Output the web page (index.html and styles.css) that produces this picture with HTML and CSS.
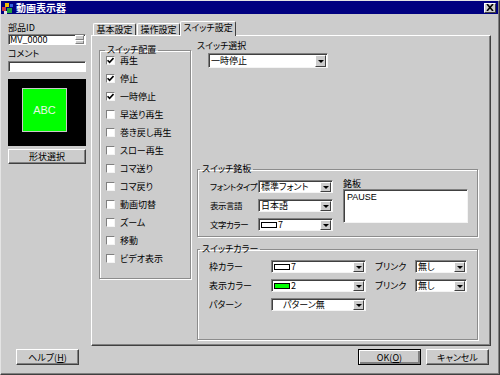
FILE: index.html
```html
<!DOCTYPE html>
<html lang="ja">
<head>
  <meta charset="UTF-8">
  <title>動画表示器</title>
  <link rel="stylesheet" href="styles.css">
</head>
<body>
  <div class="window">
    <div class="titlebar">
      <svg class="app-icon" width="12" height="12" viewBox="0 0 12 12">
        <rect x="0" y="5" width="4" height="4" fill="#d04040"/>
        <rect x="3" y="1" width="4" height="4" fill="#f0c000"/>
        <rect x="5" y="6" width="5" height="5" fill="#20a040"/>
        <rect x="8" y="2" width="3" height="3" fill="#3060e0"/>
        <rect x="2" y="9" width="3" height="3" fill="#e0e0e0"/>
      </svg>
      <span class="title">動画表示器</span>
      <span class="close">
        <svg width="8" height="7" viewBox="0 0 8 7">
          <path d="M1 0 L7 7 M7 0 L1 7" stroke="#000" stroke-width="1.6"/>
        </svg>
      </span>
    </div>

    <div class="main">
      <div class="sidebar">
        <div class="label">部品ID</div>
        <div class="field">
          <span class="field-text">MV_0000</span>
          <span class="spinner"><i></i><i></i></span>
        </div>
        <div class="label label-gap">コメント</div>
        <div class="field field-comment"></div>
        <div class="preview">
          <div class="preview-shape">ABC</div>
        </div>
        <button class="btn btn-shape">形状選択</button>
      </div>

      <div class="tabs-area">
        <div class="tabs">
          <div class="tab tab-basic">基本設定</div>
          <div class="tab tab-op">操作設定</div>
          <div class="tab tab-switch active">スイッチ設定</div>
        </div>
        <div class="panel">
          <fieldset class="group layout-group">
            <legend>スイッチ配置</legend>
            <ul class="checks">
              <li><span class="check on"><svg width="7" height="7" viewBox="0 0 7 7"><path d="M0.5 3.2 L2.6 5.4 L6.5 1" fill="none" stroke="#000" stroke-width="1.6"/></svg></span><span>再生</span></li>
              <li><span class="check on"><svg width="7" height="7" viewBox="0 0 7 7"><path d="M0.5 3.2 L2.6 5.4 L6.5 1" fill="none" stroke="#000" stroke-width="1.6"/></svg></span><span>停止</span></li>
              <li><span class="check on"><svg width="7" height="7" viewBox="0 0 7 7"><path d="M0.5 3.2 L2.6 5.4 L6.5 1" fill="none" stroke="#000" stroke-width="1.6"/></svg></span><span>一時停止</span></li>
              <li><span class="check"></span><span>早送り再生</span></li>
              <li><span class="check"></span><span>巻き戻し再生</span></li>
              <li><span class="check"></span><span>スロー再生</span></li>
              <li><span class="check"></span><span>コマ送り</span></li>
              <li><span class="check"></span><span>コマ戻り</span></li>
              <li><span class="check"></span><span>動画切替</span></li>
              <li><span class="check"></span><span>ズーム</span></li>
              <li><span class="check"></span><span>移動</span></li>
              <li><span class="check"></span><span>ビデオ表示</span></li>
            </ul>
          </fieldset>

          <div class="right">
            <div class="label">スイッチ選択</div>
            <div class="select sel-switch"><span class="val">一時停止</span><span class="arrow"></span></div>

            <fieldset class="group plate-group">
              <legend>スイッチ銘板</legend>
              <div class="plate-body">
                <div class="form-grid">
                  <span class="row-label">フォントタイプ</span>
                  <div class="select"><span class="val">標準フォント</span><span class="arrow"></span></div>
                  <span class="row-label">表示言語</span>
                  <div class="select"><span class="val">日本語</span><span class="arrow"></span></div>
                  <span class="row-label">文字カラー</span>
                  <div class="select"><span class="val"><span class="swatch"></span>7</span><span class="arrow"></span></div>
                </div>
                <div class="plate-text">
                  <div class="label">銘板</div>
                  <div class="textarea">PAUSE</div>
                </div>
              </div>
            </fieldset>

            <fieldset class="group color-group">
              <legend>スイッチカラー</legend>
              <div class="color-grid">
                <span class="row-label">枠カラー</span>
                <div class="select"><span class="val"><span class="swatch"></span>7</span><span class="arrow"></span></div>
                <span class="row-label blink">ブリンク</span>
                <div class="select"><span class="val">無し</span><span class="arrow"></span></div>

                <span class="row-label">表示カラー</span>
                <div class="select"><span class="val"><span class="swatch green"></span>2</span><span class="arrow"></span></div>
                <span class="row-label blink">ブリンク</span>
                <div class="select"><span class="val">無し</span><span class="arrow"></span></div>

                <span class="row-label">パターン</span>
                <div class="select"><span class="val val-pattern">パターン無</span><span class="arrow"></span></div>
              </div>
            </fieldset>
          </div>
        </div>
      </div>
    </div>

    <div class="footer">
      <button class="btn">ヘルプ(<u>H</u>)</button>
      <div class="footer-right">
        <button class="btn btn-default">OK(<u>O</u>)</button>
        <button class="btn">キャンセル</button>
      </div>
    </div>
  </div>
</body>
</html>
```

FILE: styles.css
```css
body {
  margin: 0;
  font-family: "Noto Sans CJK JP", "Liberation Sans", sans-serif;
  font-size: 9px;
  font-feature-settings: "palt";
  color: #000;
  background-color: #cccccc;
}

.window {
  width: 500px;
  height: 375px;
  box-sizing: border-box;
  background-color: #cccccc;
  border: 1px solid;
  border-color: #e4e4e4 #404040 #404040 #e4e4e4;
  box-shadow: inset -1px -1px #808080;
  display: flex;
  flex-direction: column;
}

/* title bar */

.titlebar {
  height: 13px;
  margin-right: 1px;
  background-color: #000080;
  display: flex;
  align-items: center;
  padding: 0 2px 0 1px;
  gap: 2px;
}

.app-icon {
  flex: none;
}

.title {
  flex: 1;
  color: #fff;
  font-weight: bold;
  font-size: 10px;
  line-height: 13px;
}

.close {
  width: 12px;
  height: 10px;
  box-sizing: border-box;
  background-color: #cccccc;
  border: 1px solid;
  border-color: #fff #404040 #404040 #fff;
  display: flex;
  align-items: center;
  justify-content: center;
}

.close svg {
  display: block;
}

/* body */

.main {
  display: flex;
  gap: 5px;
  padding: 7px 0 0 7px;
}

.sidebar {
  width: 78px;
  padding-top: 1px;
  display: flex;
  flex-direction: column;
}

.label {
  line-height: 11px;
  white-space: nowrap;
}

.sidebar .label:first-child {
  margin-bottom: 1px;
}

.label-gap {
  margin-top: 3px;
}

.field {
  height: 11px;
  box-sizing: border-box;
  background-color: #fff;
  border: 1px solid;
  border-color: #808080 #fff #fff #808080;
  box-shadow: inset 1px 1px #404040;
  display: flex;
  align-items: center;
}

.field-text {
  flex: 1;
  padding-left: 1px;
  font-size: 9px;
  line-height: 9px;
}

.spinner {
  width: 9px;
  height: 9px;
  margin-right: 1px;
  display: flex;
  flex-direction: column;
}

.spinner i {
  flex: 1;
  background-color: #cccccc;
  border: 1px solid;
  border-color: #fff #808080 #808080 #fff;
}

.field-comment {
  margin-top: 2px;
}

.preview {
  height: 67px;
  margin-top: 7px;
  background-color: #000;
  padding: 9px 0 0 14px;
  box-sizing: border-box;
}

.preview-shape {
  width: 45px;
  height: 44px;
  box-sizing: border-box;
  background-color: #00ff00;
  border: 1px solid #c8c8c8;
  color: #e8f8e8;
  font-family: "Liberation Sans", sans-serif;
  font-size: 11px;
  display: flex;
  align-items: center;
  justify-content: center;
}

.btn {
  width: 63px;
  height: 16px;
  box-sizing: border-box;
  padding: 0;
  background-color: #cccccc;
  border: 1px solid;
  border-color: #fff #404040 #404040 #fff;
  box-shadow: inset -1px -1px #808080;
  font-family: inherit;
  font-size: 9px;
  font-feature-settings: "palt";
  line-height: 13px;
  color: #000;
}

.btn-shape {
  width: 78px;
  height: 15px;
  margin-top: 3px;
}

.btn-default {
  border-color: #000;
  box-shadow: inset 1px 1px #fff, inset -2px -2px #808080;
}

/* tabs */

.tabs-area {
  width: 400px;
}

.tabs {
  height: 14px;
  display: flex;
  align-items: flex-end;
  padding-left: 2px;
}

.tab {
  height: 12px;
  box-sizing: border-box;
  border: 1px solid;
  border-bottom: none;
  border-color: #fff #404040 #404040 #fff;
  border-radius: 2px 2px 0 0;
  line-height: 11px;
  text-align: center;
  white-space: nowrap;
}

.tab-basic {
  width: 43px;
}

.tab-op {
  width: 43px;
  margin-left: 1px;
}

.tab-switch {
  width: 56px;
}

.tab.active {
  height: 15px;
  margin-bottom: -1px;
  position: relative;
  z-index: 1;
  background-color: #cccccc;
  line-height: 12px;
}

.panel {
  height: 311px;
  box-sizing: border-box;
  border: 1px solid;
  border-color: #fff #404040 #404040 #fff;
  box-shadow: inset -1px -1px #808080;
  display: flex;
  align-items: flex-start;
  gap: 6px;
  padding: 4px 0 0 7px;
}

/* group boxes */

.group {
  margin: 0;
  padding: 0;
  min-width: 0;
  border: 1px solid #8c8c8c;
  box-shadow: inset 1px 1px #fff, 1px 1px #fff;
}

.group legend {
  padding: 0 2px;
  margin-left: 2px;
  line-height: 10px;
  white-space: nowrap;
}

.layout-group {
  width: 92px;
  height: 234px;
  box-sizing: border-box;
  margin-top: 5px;
}

.layout-group legend {
  margin-left: 5px;
}

.checks {
  list-style: none;
  margin: -4px 0 0 0;
  padding: 0 0 0 6px;
}

.checks li {
  height: 18px;
  display: flex;
  align-items: center;
  gap: 5px;
  white-space: nowrap;
}

.checks li span:last-child {
  line-height: 9px;
}

.check {
  width: 9px;
  height: 9px;
  box-sizing: border-box;
  flex: none;
  background-color: #fff;
  border: 1px solid;
  border-color: #808080 #f4f4f4 #f4f4f4 #808080;
  display: flex;
  align-items: center;
  justify-content: center;
}

.check svg {
  display: block;
}

.right {
  width: 281px;
  display: flex;
  flex-direction: column;
}

.right > .label {
  line-height: 12px;
}

/* dropdowns */

.select {
  height: 13px;
  box-sizing: border-box;
  display: flex;
  background-color: #fff;
  border: 1px solid;
  border-color: #808080 #f4f4f4 #f4f4f4 #808080;
  box-shadow: inset 1px 1px #404040;
}

.select .val {
  flex: 1;
  min-width: 0;
  padding-left: 2px;
  line-height: 11px;
  white-space: nowrap;
  overflow: hidden;
  display: flex;
  align-items: center;
}

.select .arrow {
  width: 11px;
  flex: none;
  box-sizing: border-box;
  margin: 1px 1px 0 0;
  background-color: #cccccc;
  border: 1px solid;
  border-color: #fff #404040 #404040 #fff;
  display: flex;
  align-items: center;
  justify-content: center;
}

.select .arrow::after {
  content: "";
  border-left: 3px solid transparent;
  border-right: 3px solid transparent;
  border-top: 3px solid #000;
}

.sel-switch {
  width: 120px;
  height: 15px;
  margin: 1px 0 0 11px;
}

.sel-switch .val {
  line-height: 13px;
}

.swatch {
  width: 16px;
  height: 6px;
  box-sizing: border-box;
  border: 1px solid #000;
  background-color: #fff;
  margin-right: 1px;
  flex: none;
}

.swatch.green {
  background-color: #00ff00;
}

.select .val-pattern {
  padding-left: 11px;
}

/* nameplate group */

.plate-group {
  margin-top: 96px;
}

.plate-body {
  display: flex;
  gap: 10px;
  padding: 4px 9px 5px 12px;
}

.form-grid {
  margin-top: 2px;
  display: grid;
  grid-template-columns: 48px 75px;
  grid-auto-rows: 13px;
  row-gap: 6px;
  align-items: center;
}

.row-label {
  white-space: nowrap;
  line-height: 11px;
}

.form-grid .row-label {
  font-size: 8.5px;
  letter-spacing: -0.5px;
}

.plate-text {
  width: 125px;
}

.textarea {
  height: 34px;
  box-sizing: border-box;
  background-color: #fff;
  border: 1px solid;
  border-color: #808080 #f4f4f4 #f4f4f4 #808080;
  box-shadow: inset 1px 1px #404040;
  padding: 2px 3px;
  font-family: "Liberation Sans", sans-serif;
  font-size: 9px;
  line-height: 10px;
}

/* colour group */

.color-group {
  margin-top: 7px;
  height: 96px;
  box-sizing: border-box;
}

.color-grid {
  display: grid;
  grid-template-columns: 62px 95px 49px 52px;
  grid-auto-rows: 13px;
  row-gap: 6px;
  align-items: center;
  padding: 6px 0 0 11px;
}

.color-grid .blink {
  margin-left: 9px;
}

/* footer */

.footer {
  margin-top: 3px;
  display: flex;
  justify-content: space-between;
  padding: 0 10px 0 15px;
}

.footer-right {
  display: flex;
  gap: 5px;
}
```
